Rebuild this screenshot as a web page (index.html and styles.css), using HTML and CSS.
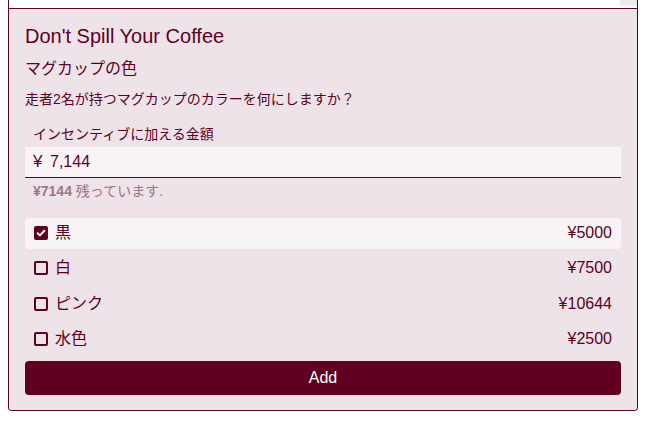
FILE: index.html
```html
<!DOCTYPE html>
<html lang="ja">
<head>
<meta charset="utf-8">
<link rel="stylesheet" href="styles.css">
</head>
<body>
<div class="frame">
  <div class="top-strip"><div class="grip"></div></div>
  <div class="card">
    <h1 class="title">Don't Spill Your Coffee</h1>
    <h2 class="subtitle">マグカップの色</h2>
    <p class="question">走者2名が持つマグカップのカラーを何にしますか？</p>
    <label class="field-label">インセンティブに加える金額</label>
    <div class="input"><span class="currency">¥</span><span class="amount">7,144</span></div>
    <p class="remaining"><b>¥7144</b> 残っています.</p>
    <ul class="options">
      <li class="option selected"><span class="box checked"><svg viewBox="0 0 14 14" width="14" height="14"><path d="M3.6 7.2 L5.9 9.4 L10.4 4.8" fill="none" stroke="#fff" stroke-width="2" stroke-linecap="round" stroke-linejoin="round"/></svg></span><span class="name">黒</span><span class="price">¥5000</span></li>
      <li class="option"><span class="box"></span><span class="name">白</span><span class="price">¥7500</span></li>
      <li class="option"><span class="box"></span><span class="name">ピンク</span><span class="price">¥10644</span></li>
      <li class="option"><span class="box"></span><span class="name">水色</span><span class="price">¥2500</span></li>
    </ul>
    <button class="add">Add</button>
  </div>
</div>
</body>
</html>
```
FILE: styles.css
```css
html, body {
  margin: 0;
  padding: 0;
  background: #ffffff;
}
body {
  font-family: "Liberation Sans", "Noto Sans CJK JP", sans-serif;
  color: #5f0022;
}
.frame {
  margin-left: 8px;
  width: 630px;
  box-sizing: border-box;
  border-left: 1px solid #5f0022;
  border-right: 1px solid #5f0022;
  border-bottom: 1px solid #5f0022;
  border-radius: 0 0 4px 4px;
  overflow: hidden;
}
.top-strip {
  height: 8px;
  background: #ffffff;
  border-bottom: 1px solid #5f0022;
  display: flex;
  justify-content: flex-end;
  align-items: flex-start;
}
.grip {
  width: 17px;
  height: 6px;
  background: #ececec;
}
.card {
  background: #eee3e8;
  padding: 16px 16px 15px 16px;
  display: flex;
  flex-direction: column;
}
.title {
  margin: 0;
  font-size: 20px;
  font-weight: normal;
  line-height: 23px;
}
.subtitle {
  margin: 9px 0 0 0;
  font-size: 16px;
  font-weight: normal;
  line-height: 24px;
}
.question {
  margin: 8px 0 0 0;
  font-size: 14px;
  line-height: 20px;
}
.field-label {
  margin-top: 15px;
  padding-left: 8px;
  font-size: 14px;
  line-height: 20px;
}
.input {
  margin-top: 3px;
  height: 30px;
  background: #f8f4f6;
  border-bottom: 1px solid #5f0022;
  padding-left: 8px;
  font-size: 16px;
  line-height: 30px;
  display: flex;
  align-items: center;
}
.currency {
  display: inline-block;
  width: 17px;
  font-size: 17px;
}
.remaining {
  margin: 3px 0 0 0;
  padding-left: 8px;
  font-size: 14px;
  line-height: 20px;
  color: #a0738a;
}
.remaining b {
  font-weight: bold;
}
.options {
  list-style: none;
  margin: 17px 0 0 0;
  padding: 0;
  display: flex;
  flex-direction: column;
  gap: 4.5px;
}
.option {
  height: 31px;
  display: flex;
  align-items: center;
  padding: 0 9px;
  border-radius: 4px;
  font-size: 16px;
  line-height: 18px;
}
.option.selected {
  background: #f8f4f6;
}
.name, .price {
  display: block;
  line-height: 18px;
  margin-top: -2px;
}
.box {
  width: 14px;
  height: 14px;
  box-sizing: border-box;
  border: 2px solid #5f0022;
  border-radius: 2px;
  margin-right: 7px;
  margin-top: -2px;
  display: flex;
  flex-shrink: 0;
}
.box.checked {
  border: none;
  background: #5f0022;
}
.name {
  flex: 1;
}
.price {
  text-align: right;
}
.add {
  margin-top: 5.5px;
  height: 34px;
  border: none;
  border-radius: 4px;
  background: #5f0022;
  color: #ffffff;
  font-family: "Liberation Sans", "Noto Sans CJK JP", sans-serif;
  font-size: 16px;
  padding: 0;
}
```
